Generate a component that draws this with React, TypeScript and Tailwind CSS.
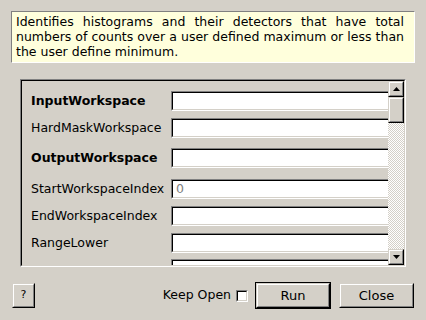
import React from "react";

const font = { fontFamily: '"DejaVu Sans", sans-serif' };

function Sunken({ className = "", children }: { className?: string; children?: React.ReactNode }) {
  return (
    <div className={"border-t border-l border-[#808080] border-b border-r border-b-white border-r-white " + className}>
      <div className="h-full w-full border-t border-l border-black border-b border-r border-b-[#d4d0c8] border-r-[#d4d0c8] bg-white flex items-center">
        {children}
      </div>
    </div>
  );
}

function Raised({ className = "", children }: { className?: string; children?: React.ReactNode }) {
  return (
    <div className={"border-t border-l border-[#d4d0c8] border-b border-r border-b-black border-r-black " + className}>
      <div className="h-full w-full border-t border-l border-white border-b border-r border-b-[#808080] border-r-[#808080] bg-[#d4d0c8] flex items-center justify-center">
        {children}
      </div>
    </div>
  );
}

const rows: { label: string; bold?: boolean; mt: string; placeholder?: string }[] = [
  { label: "InputWorkspace", bold: true, mt: "mt-[10px]" },
  { label: "HardMaskWorkspace", mt: "mt-[7px]" },
  { label: "OutputWorkspace", bold: true, mt: "mt-[10px]" },
  { label: "StartWorkspaceIndex", mt: "mt-[11px]", placeholder: "0" },
  { label: "EndWorkspaceIndex", mt: "mt-[7px]" },
  { label: "RangeLower", mt: "mt-[7px]" },
  { label: "", mt: "mt-[6px]" },
];

export default function App() {
  return (
    <div className="w-[426px] h-[320px] bg-[#d4d0c8] relative overflow-hidden text-[12.5px] text-black" style={font}>
      <div className="pt-[11px] pl-[11px] pr-[11px]">
        <div className="h-[52px] bg-[#ffffdc] border-t border-l border-[#808080] border-b border-r border-b-white border-r-white pl-[4px] pr-[10px] pt-[2px] leading-[15px] text-justify">
          Identifies histograms and their detectors that have total numbers of counts over a user defined maximum or less than the user define minimum.
        </div>
      </div>
      <div className="ml-[20px] mt-[16px] w-[386px] h-[188px] border-t border-l border-[#808080] border-b border-r border-b-white border-r-white">
        <div className="h-full w-full border-t border-l border-black border-b border-r border-b-[#d4d0c8] border-r-[#d4d0c8] flex">
          <div className="flex-1 overflow-hidden">
            <div className="flex flex-col pl-[9px]">
              {rows.map((r, i) => (
                <div key={i} className={"flex items-center h-[20px] " + r.mt}>
                  <div className={"w-[140px] shrink-0 whitespace-nowrap " + (r.bold ? "font-bold" : "")}>{r.label}</div>
                  <Sunken className="w-[260px] h-[20px] shrink-0">
                    {r.placeholder ? <span className="pl-[3px] text-[#808080]">{r.placeholder}</span> : null}
                  </Sunken>
                </div>
              ))}
            </div>
          </div>
          <div className="w-[16px] h-full flex flex-col">
            <Raised className="w-[16px] h-[16px]">
              <svg width="7" height="4" viewBox="0 0 7 4"><path d="M3.5 0 L7 4 L0 4 Z" fill="black" /></svg>
            </Raised>
            <Raised className="w-[16px] h-[26px]" />
            <div className="flex-1 [background:repeating-conic-gradient(#d4d0c8_0%_25%,#ffffff_0%_50%)_0_0/2px_2px]" />
            <Raised className="w-[16px] h-[16px]">
              <svg width="7" height="4" viewBox="0 0 7 4"><path d="M0 0 L7 0 L3.5 4 Z" fill="black" /></svg>
            </Raised>
          </div>
        </div>
      </div>
      <div className="flex items-center mt-[15px] pl-[12px] pr-[12px] h-[27px]">
        <Raised className="w-[23px] h-[25px]">
          <span className="text-[11px]">?</span>
        </Raised>
        <div className="flex-1" />
        <span className="mr-[5px]">Keep Open</span>
        <div className="w-[12px] h-[12px] border-t border-l border-[#808080] border-b border-r border-b-white border-r-white">
          <div className="w-full h-full border-t border-l border-black border-b border-r border-b-[#d4d0c8] border-r-[#d4d0c8] bg-white" />
        </div>
        <div className="ml-[7px] w-[76px] h-[27px] border border-black">
          <Raised className="w-full h-full">
            <span className="text-[13px]">Run</span>
          </Raised>
        </div>
        <Raised className="ml-[8px] w-[75px] h-[25px]">
          <span className="text-[13px]">Close</span>
        </Raised>
      </div>
    </div>
  );
}
